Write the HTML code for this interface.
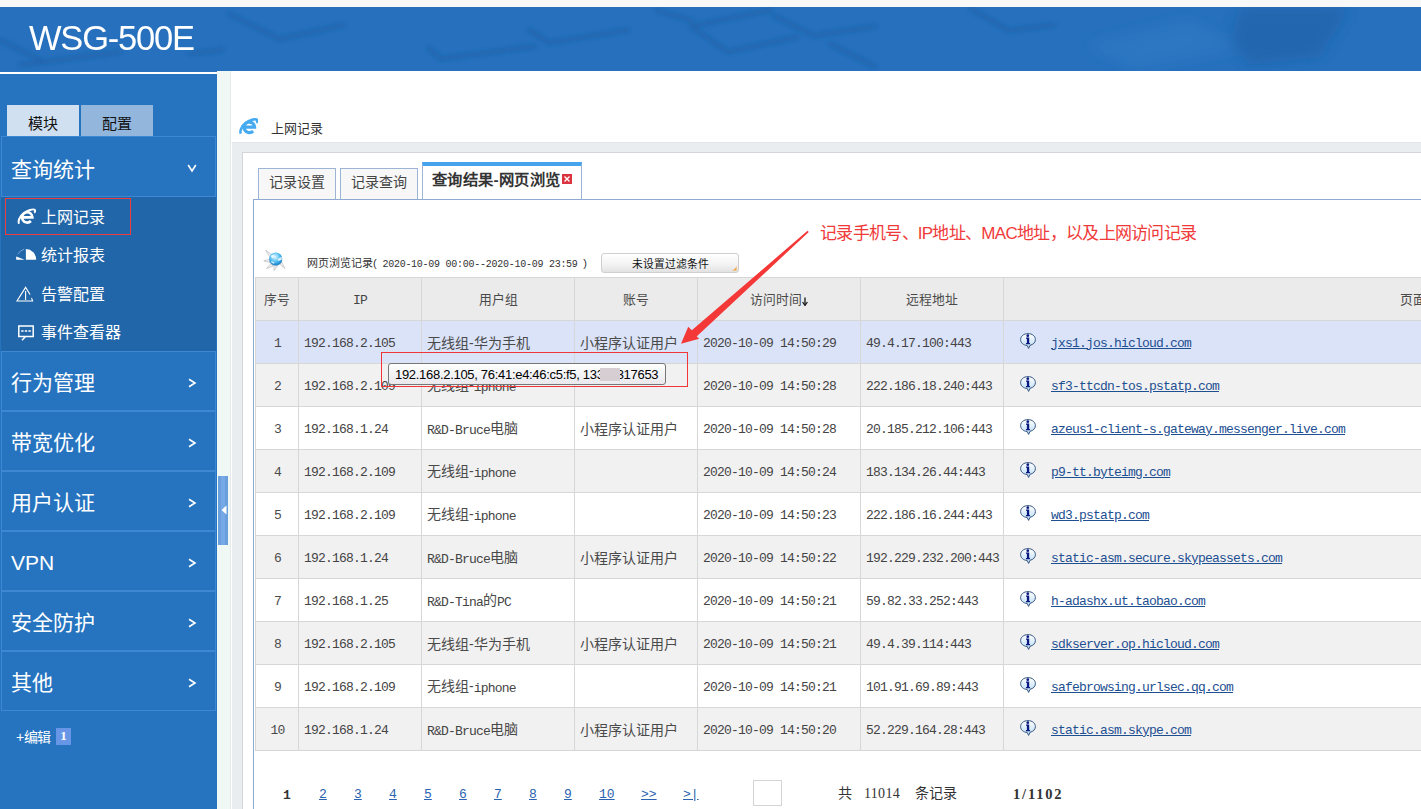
<!DOCTYPE html>
<html lang="zh-CN">
<head>
<meta charset="utf-8">
<style>
*{margin:0;padding:0;box-sizing:border-box}
html,body{width:1421px;height:809px;overflow:hidden;background:#fff;font-family:"Liberation Sans",sans-serif;position:relative}
.a{position:absolute}
#topstrip{left:0;top:0;width:1421px;height:7px;background:#f8f8f8}
#hdr{left:0;top:7px;width:1421px;height:64px;background:#2670bd;overflow:hidden}
#logo{left:29px;top:10px;color:#fff;font-size:35px;line-height:42px;letter-spacing:-1.2px;transform:scaleX(0.985);transform-origin:0 0}
#side{left:0;top:71px;width:217px;height:738px;background:#2674c0}
#sideline{left:0;top:72px;width:217px;height:2px;background:#fff}
.stab{top:105px;height:31px;width:72px;text-align:center;font-size:15px;line-height:37px;color:#111}
.mi{left:1px;width:215px;height:60px;border:1px solid #3e88d2;background:#2674c0;color:#fff}
.mi .t{position:absolute;left:9px;top:17px;font-size:21px;line-height:28px}
.mi.first .t{top:19px}
.mi .c{position:absolute;left:185px;top:26px}
.mi.first .c{top:26px}
#sub{left:1px;top:197px;width:215px;height:154px;background:#2166a8}
.si{left:41px;color:#fff;font-size:16px;line-height:22px}
#strip{left:217px;top:71px;width:14px;height:738px;background:#f0f8f6;border-right:1px solid #e6eaec}
#handle{left:218px;top:476px;width:10px;height:69px;background:#6a9fde}
#gray{left:231px;top:142px;width:1190px;height:667px;background:#e9edf0;border-left:1px solid #fff;border-top:1px solid #e3e6e9}
#inner{left:242px;top:152px;width:1179px;height:657px;background:#fff;border-left:1px solid #d2d6da;border-top:1px solid #d2d6da}

.tab{top:168px;height:32px;background:#f7f7f7;border:1px solid #9db5d5;border-bottom:none;font-size:14px;line-height:26px;color:#444;text-align:center}
#acttab{left:422px;top:162px;width:160px;height:38px;background:#fff;border:1px solid #9db5d5;border-top:4px solid #46a3ee;border-bottom:none;font-size:15.3px;font-weight:bold;color:#333;line-height:28px;padding-left:9px;letter-spacing:0.4px}
#xclose{position:absolute;left:139px;top:8px}
#panel{left:253px;top:199px;width:1168px;height:610px;border-left:1px solid #8eaad0;border-top:1px solid #8eaad0;background:transparent}
#rtitle{left:307px;top:256px;font-size:11px;line-height:14px;color:#333}
.m{font-family:"Liberation Mono",monospace}
#rtitle .m{font-size:10px;letter-spacing:-0.26px}
#fbtn{left:601px;top:253px;width:138px;height:20px;border:1px solid #cfcfcf;border-radius:3px;background:linear-gradient(#fff,#f2f2f2 60%,#e2e2e2);font-size:10.8px;line-height:21px;text-align:center;color:#111;padding-left:1px}
#tbl{left:255px;top:277px;border-collapse:collapse;table-layout:fixed;width:1248px}
#tbl td{border:1px solid #d7d7d7;height:43px;font-size:14px;color:#4a4a4a;padding:1px 0 0 5px;white-space:nowrap;overflow:hidden;line-height:20px}
#tbl td.m{font-size:13px;letter-spacing:-0.8px;padding-top:3px;color:#444}
#tbl span.m{font-size:13px;letter-spacing:-0.8px;position:relative;top:1px;color:#444}
#tbl tr.h td{background:#ebebeb;text-align:center;font-size:12.8px;padding:1px 0 0 0}
#tbl tr.h td.pg{text-align:left;padding-left:396px}
#tbl tr.r1 td{background:#dbe3f8}
#tbl tr.g td{background:#f1f1f1}
#tbl tr.w td{background:#fff}
#tbl td.c{text-align:center;padding:3px 0 0 1px;font-family:"Liberation Mono",monospace;font-size:13px;letter-spacing:-0.8px}
#tbl td.u{padding-left:16px;padding-top:1px}

#tbl a{color:#1d4f91;text-decoration:underline;font-family:"Liberation Mono",monospace;font-size:13px;letter-spacing:-0.8px}
.pn{top:787px;font-size:13px;line-height:16px;font-family:"Liberation Mono",monospace}
.pn.b{font-weight:bold;color:#333;top:788px}
.pn.l{color:#2b63b0;text-decoration:underline}
#note{left:820px;top:223px;font-size:17px;line-height:22px;color:#f03a3a;white-space:nowrap;letter-spacing:-0.7px}
#redbox{left:381px;top:352px;width:307px;height:35px;border:1.5px solid #f23636}
#tip{left:388px;top:363px;width:278px;height:22px;border:1px solid #777;border-radius:3px;background:linear-gradient(#fff,#e9e9ee);font-size:13px;line-height:21px;color:#000;padding-left:6px;white-space:nowrap;letter-spacing:-0.3px}
#blur{display:inline-block;width:20px;height:13px;background:#d6ced2;vertical-align:-2px;margin:0 -3px 0 -4px;position:relative}

#redsel{left:5px;top:198px;width:126px;height:37px;border:1px solid #f03c3c}
.info{display:inline-block;width:16px;height:16px;vertical-align:-3px;margin-right:15px;background:none;position:relative;top:-1px}
</style>
</head>
<body>
<div id="topstrip" class="a"></div>
<div id="hdr" class="a">
  <svg class="a" style="left:0;top:0" width="1421" height="64" viewBox="0 0 1421 64">
 <defs><filter id="bl" x="-10%" y="-50%" width="120%" height="200%"><feGaussianBlur stdDeviation="2.2"/></filter><filter id="bl2" x="-30%" y="-50%" width="160%" height="200%"><feGaussianBlur stdDeviation="7"/></filter></defs>
 <g filter="url(#bl)" fill="none" stroke="#1a5699" stroke-opacity="0.45" stroke-width="4" stroke-linejoin="round" stroke-linecap="round">
  <path d="M229.5 7.0 L279.7 32.0 L344.0 18.0"/>
  <path d="M428.7 41.0 L441.0 51.8 L534.6 39.3"/>
  <path d="M529.0 23.0 L549.0 35.7 L628.0 23.0"/>
  <path d="M190.0 46.5 L222.0 43.0"/>
  <path d="M656.6 3.4 L692.5 14.0"/>
  <path d="M771.0 3.0 L690.7 19.4 L728.0 44.8 L797.6 30.0"/>
  <path d="M773.6 8.7 L813.7 28.7 L875.0 19.4"/>
  <path d="M829.7 36.8 L875.0 59.5"/>
  <path d="M971.0 2.0 L1009.0 23.4 L1054.0 18.0"/>
  <path d="M0.0 33.0 L40.0 53.0"/>
  <path d="M20.0 58.0 L120.0 45.0"/>
 </g>
 <g filter="url(#bl2)">
  <path d="M1240 0 L1350 0 L1320 50 L1250 58 L1230 35 Z" fill="#1a5596" fill-opacity="0.38"/>
  <path d="M1085 38 L1190 12 L1240 42 L1135 62 Z" fill="#3b86d0" fill-opacity="0.25"/>
 </g>
</svg>
  <div id="logo" class="a">WSG-500E</div>
</div>
<div id="side" class="a"></div>
<div id="sideline" class="a"></div>
<div class="a stab" style="left:7px;background:#d0e0f1">模块</div>
<div class="a stab" style="left:81px;background:#93b6dc">配置</div>

<div class="a mi first" style="top:136px;height:61px"><span class="t">查询统计</span><svg class="c" width="10" height="10" viewBox="0 0 10 10"><path d="M1.2 2 L5 8 L8.8 2" fill="none" stroke="#fff" stroke-width="1.6"/></svg></div>
<div id="sub" class="a"></div>
<div class="a si" style="top:207px">上网记录</div>
<div class="a si" style="top:245px">统计报表</div>
<div class="a si" style="top:284px">告警配置</div>
<div class="a si" style="top:322px">事件查看器</div>

<div class="a mi" style="top:351px"><span class="t">行为管理</span><svg class="c" width="10" height="10" viewBox="0 0 10 10"><path d="M2 1.2 L8 5 L2 8.8" fill="none" stroke="#fff" stroke-width="1.6"/></svg></div>
<div class="a mi" style="top:411px"><span class="t">带宽优化</span><svg class="c" width="10" height="10" viewBox="0 0 10 10"><path d="M2 1.2 L8 5 L2 8.8" fill="none" stroke="#fff" stroke-width="1.6"/></svg></div>
<div class="a mi" style="top:471px"><span class="t">用户认证</span><svg class="c" width="10" height="10" viewBox="0 0 10 10"><path d="M2 1.2 L8 5 L2 8.8" fill="none" stroke="#fff" stroke-width="1.6"/></svg></div>
<div class="a mi" style="top:531px"><span class="t">VPN</span><svg class="c" width="10" height="10" viewBox="0 0 10 10"><path d="M2 1.2 L8 5 L2 8.8" fill="none" stroke="#fff" stroke-width="1.6"/></svg></div>
<div class="a mi" style="top:591px"><span class="t">安全防护</span><svg class="c" width="10" height="10" viewBox="0 0 10 10"><path d="M2 1.2 L8 5 L2 8.8" fill="none" stroke="#fff" stroke-width="1.6"/></svg></div>
<div class="a mi" style="top:651px"><span class="t">其他</span><svg class="c" width="10" height="10" viewBox="0 0 10 10"><path d="M2 1.2 L8 5 L2 8.8" fill="none" stroke="#fff" stroke-width="1.6"/></svg></div>


<svg class="a" style="left:17px;top:208px" width="19" height="17" viewBox="0 0 18 16" fill="#fff" stroke="#fff"><path fill="none" stroke-width="2.5" d="M5.4 8.8 H14.6 A4.9 4.9 0 1 0 13.2 12.3"/><path fill="none" stroke-width="1.9" d="M2 14.8 C0.6 12.6 2.6 7.8 6.2 5 C9.8 2.2 15.4 0.4 16.8 1.7 C17.6 2.5 17.2 3.7 16.2 4.3"/></svg>
<svg class="a" style="left:16px;top:248px" width="21" height="13" viewBox="0 0 21 13">
 <path d="M9.9 1 A10.5 10.8 0 0 1 20.2 11.8 L9.9 11.8 Z" fill="#fff"/>
 <path d="M1.8 6.2 A10 10 0 0 1 8.2 1.2" fill="none" stroke="#7fa6d2" stroke-width="0.9"/>
 <path d="M0.2 8.4 Q4 9.6 8.6 11.8 L0.2 11.8 Z" fill="#fff"/>
</svg>
<svg class="a" style="left:16px;top:286px" width="18" height="17" viewBox="0 0 18 17" fill="none" stroke="#fff" stroke-width="1.1" stroke-linecap="round">
 <path d="M13.9 8.2 L9.6 1.4 L1 15 H16.6 L15.7 12.3"/>
 <path d="M9.6 5.4 V13.4"/>
</svg>
<svg class="a" style="left:17px;top:325px" width="18" height="17" viewBox="0 0 18 17" fill="none" stroke="#fff" stroke-width="1.5">
 <path d="M8.6 11.4 H1.8 V1 H16.2 V11.4 H8.6 L5 15.2"/>
 <path d="M4.2 6 H6.6 M7.8 6 H10.2 M11.4 6 H13.8" stroke-width="1.6"/>
</svg>
<div class="a" id="redsel"></div>
<div id="strip" class="a"></div>
<div id="handle" class="a"><svg width="10" height="69" viewBox="0 0 10 69" style="display:block"><rect x="3" y="0" width="4" height="69" fill="#7fb0ea" opacity="0.6"/><path d="M3.5 34 L8.5 29.5 L8.5 38.5 Z" fill="#fff"/></svg></div>
<div class="a" style="left:16px;top:728px;color:#fff;font-size:14px;line-height:18px;letter-spacing:-0.5px">+编辑</div>
<div class="a" style="left:56px;top:728px;width:15px;height:17px;background:#6796e6;color:#fff;font-size:13px;line-height:16px;font-weight:bold;text-align:center;font-family:'Liberation Serif',serif">1</div>


<div id="gray" class="a"></div>
<div id="inner" class="a"></div>
<svg class="a" style="left:239px;top:118px" width="19" height="17" viewBox="0 0 18 16" fill="#45aaf0" stroke="#45aaf0"><path fill="none" stroke-width="3" d="M5.6 8.6 H14.8 A5 5 0 1 0 13.4 12.3"/><path fill="none" stroke-width="2.4" d="M1.8 14.8 C0.4 12.6 2.4 7.6 6.2 4.8 C9.8 2 15.4 0.2 16.9 1.6 C17.6 2.3 17.3 3.6 16.3 4.3"/></svg>
<svg class="a" style="left:263px;top:248px" width="23" height="23" viewBox="0 0 23 23">
 <g fill="#f2f2f2" stroke="#b4b4b4" stroke-width="0.6">
  <path d="M2.5 2 L10 7.5 L7.5 10 Z"/><path d="M0.8 13 L7 11 L7.5 14.5 Z"/><path d="M3.5 20.5 L8 15.5 L10 18 Z"/><path d="M11 22.5 L11 17.5 L14.5 17.8 Z"/><path d="M22 20.5 L16.5 16 L18.5 14 Z"/>
 </g>
 <defs><radialGradient id="gl" cx="0.45" cy="0.35" r="0.75"><stop offset="0" stop-color="#e6f8ff"/><stop offset="0.5" stop-color="#4cbcf0"/><stop offset="1" stop-color="#0a65b5"/></radialGradient></defs>
 <circle cx="12.7" cy="11" r="6.6" fill="url(#gl)"/>
 <path d="M7.5 7.8 L10.8 6.5 L11.5 9 L9 10.2 Z M14.5 11 L18.5 9 L19 11.5 L15.5 13 Z M8.5 13 L11.5 14.5 L11 15.8 L8 14.2 Z" fill="#f4fbff" opacity="0.85"/>
</svg>


<!-- page title -->
<div class="a" style="left:271px;top:121px;font-size:13px;line-height:16px;color:#333">上网记录</div>

<!-- tabs -->
<div class="a tab" style="left:258px;width:78px">记录设置</div>
<div class="a tab" style="left:340px;width:78px">记录查询</div>
<div class="a" id="acttab"><span>查询结果-网页浏览</span><svg id="xclose" width="10" height="10" viewBox="0 0 10 10"><rect width="10" height="10" fill="#d9343f"/><path d="M2.5 2.5 L7.5 7.5 M7.5 2.5 L2.5 7.5" stroke="#fff" stroke-width="1.4"/></svg></div>
<div class="a" id="panel"></div>

<div class="a" id="rtitle">网页浏览记录(<span class="m"> 2020-10-09 00:00--2020-10-09 23:59 </span>)</div>
<div class="a" id="fbtn">未设置过滤条件<svg style="position:absolute;right:1px;bottom:1px" width="7" height="7" viewBox="0 0 7 7"><path d="M6.5 0.5 C6.5 4 4.5 6.5 0.5 6.5 L6.5 6.5 Z" fill="#f0a030"/></svg></div>

<!-- table -->
<table class="a" id="tbl">
<colgroup><col style="width:43px"><col style="width:123px"><col style="width:153px"><col style="width:123px"><col style="width:163px"><col style="width:143px"><col style="width:500px"></colgroup>
<tr class="h"><td>序号</td><td><span class="m">IP</span></td><td>用户组</td><td>账号</td><td>访问时间<svg width="6" height="9" viewBox="0 0 6 9" style="vertical-align:-2px;margin-left:0px"><path d="M3 0.5 V7.5" stroke="#111" stroke-width="1.3"/><path d="M0.6 5 L3 8.5 L5.4 5" fill="none" stroke="#111" stroke-width="1.2"/></svg></td><td>远程地址</td><td class="pg">页面地址</td></tr>
<tr class="r1"><td class="c">1</td><td class="m">192.168.2.105</td><td>无线组-华为手机</td><td>小程序认证用户</td><td class="m">2020-10-09 14:50:29</td><td class="m">49.4.17.100:443</td><td class="u"><svg class="info" width="16" height="16" viewBox="0 0 16 16"><defs><linearGradient id="ig1" x1="0" y1="0" x2="0" y2="1"><stop offset="0" stop-color="#ffffff"/><stop offset="1" stop-color="#b7dcf5"/></linearGradient></defs><path d="M8 0.6 C12.3 0.6 15.4 3.2 15.4 6.6 C15.4 9.4 13.3 11.6 10 12.3 L8.6 15.4 L7.2 12.5 C3.3 12.2 0.6 9.8 0.6 6.6 C0.6 3.2 3.7 0.6 8 0.6 Z" fill="url(#ig1)" stroke="#35557f" stroke-width="1"/><circle cx="7.8" cy="2.7" r="1.4" fill="#0b1a80"/><path d="M6 4.6 H9.2 V10 H10 V11.2 H6 V10 H6.9 V5.8 H6 Z" fill="#0b1a80"/></svg><a>jxs1.jos.hicloud.com</a></td></tr>
<tr class="g"><td class="c">2</td><td class="m">192.168.2.109</td><td>无线组-<span class="m">iphone</span></td><td></td><td class="m">2020-10-09 14:50:28</td><td class="m">222.186.18.240:443</td><td class="u"><svg class="info" width="16" height="16" viewBox="0 0 16 16"><defs><linearGradient id="ig2" x1="0" y1="0" x2="0" y2="1"><stop offset="0" stop-color="#ffffff"/><stop offset="1" stop-color="#b7dcf5"/></linearGradient></defs><path d="M8 0.6 C12.3 0.6 15.4 3.2 15.4 6.6 C15.4 9.4 13.3 11.6 10 12.3 L8.6 15.4 L7.2 12.5 C3.3 12.2 0.6 9.8 0.6 6.6 C0.6 3.2 3.7 0.6 8 0.6 Z" fill="url(#ig2)" stroke="#35557f" stroke-width="1"/><circle cx="7.8" cy="2.7" r="1.4" fill="#0b1a80"/><path d="M6 4.6 H9.2 V10 H10 V11.2 H6 V10 H6.9 V5.8 H6 Z" fill="#0b1a80"/></svg><a>sf3-ttcdn-tos.pstatp.com</a></td></tr>
<tr class="w"><td class="c">3</td><td class="m">192.168.1.24</td><td><span class="m">R&amp;D-Bruce</span>电脑</td><td>小程序认证用户</td><td class="m">2020-10-09 14:50:28</td><td class="m">20.185.212.106:443</td><td class="u"><svg class="info" width="16" height="16" viewBox="0 0 16 16"><defs><linearGradient id="ig3" x1="0" y1="0" x2="0" y2="1"><stop offset="0" stop-color="#ffffff"/><stop offset="1" stop-color="#b7dcf5"/></linearGradient></defs><path d="M8 0.6 C12.3 0.6 15.4 3.2 15.4 6.6 C15.4 9.4 13.3 11.6 10 12.3 L8.6 15.4 L7.2 12.5 C3.3 12.2 0.6 9.8 0.6 6.6 C0.6 3.2 3.7 0.6 8 0.6 Z" fill="url(#ig3)" stroke="#35557f" stroke-width="1"/><circle cx="7.8" cy="2.7" r="1.4" fill="#0b1a80"/><path d="M6 4.6 H9.2 V10 H10 V11.2 H6 V10 H6.9 V5.8 H6 Z" fill="#0b1a80"/></svg><a>azeus1-client-s.gateway.messenger.live.com</a></td></tr>
<tr class="g"><td class="c">4</td><td class="m">192.168.2.109</td><td>无线组-<span class="m">iphone</span></td><td></td><td class="m">2020-10-09 14:50:24</td><td class="m">183.134.26.44:443</td><td class="u"><svg class="info" width="16" height="16" viewBox="0 0 16 16"><defs><linearGradient id="ig4" x1="0" y1="0" x2="0" y2="1"><stop offset="0" stop-color="#ffffff"/><stop offset="1" stop-color="#b7dcf5"/></linearGradient></defs><path d="M8 0.6 C12.3 0.6 15.4 3.2 15.4 6.6 C15.4 9.4 13.3 11.6 10 12.3 L8.6 15.4 L7.2 12.5 C3.3 12.2 0.6 9.8 0.6 6.6 C0.6 3.2 3.7 0.6 8 0.6 Z" fill="url(#ig4)" stroke="#35557f" stroke-width="1"/><circle cx="7.8" cy="2.7" r="1.4" fill="#0b1a80"/><path d="M6 4.6 H9.2 V10 H10 V11.2 H6 V10 H6.9 V5.8 H6 Z" fill="#0b1a80"/></svg><a>p9-tt.byteimg.com</a></td></tr>
<tr class="w"><td class="c">5</td><td class="m">192.168.2.109</td><td>无线组-<span class="m">iphone</span></td><td></td><td class="m">2020-10-09 14:50:23</td><td class="m">222.186.16.244:443</td><td class="u"><svg class="info" width="16" height="16" viewBox="0 0 16 16"><defs><linearGradient id="ig5" x1="0" y1="0" x2="0" y2="1"><stop offset="0" stop-color="#ffffff"/><stop offset="1" stop-color="#b7dcf5"/></linearGradient></defs><path d="M8 0.6 C12.3 0.6 15.4 3.2 15.4 6.6 C15.4 9.4 13.3 11.6 10 12.3 L8.6 15.4 L7.2 12.5 C3.3 12.2 0.6 9.8 0.6 6.6 C0.6 3.2 3.7 0.6 8 0.6 Z" fill="url(#ig5)" stroke="#35557f" stroke-width="1"/><circle cx="7.8" cy="2.7" r="1.4" fill="#0b1a80"/><path d="M6 4.6 H9.2 V10 H10 V11.2 H6 V10 H6.9 V5.8 H6 Z" fill="#0b1a80"/></svg><a>wd3.pstatp.com</a></td></tr>
<tr class="g"><td class="c">6</td><td class="m">192.168.1.24</td><td><span class="m">R&amp;D-Bruce</span>电脑</td><td>小程序认证用户</td><td class="m">2020-10-09 14:50:22</td><td class="m">192.229.232.200:443</td><td class="u"><svg class="info" width="16" height="16" viewBox="0 0 16 16"><defs><linearGradient id="ig6" x1="0" y1="0" x2="0" y2="1"><stop offset="0" stop-color="#ffffff"/><stop offset="1" stop-color="#b7dcf5"/></linearGradient></defs><path d="M8 0.6 C12.3 0.6 15.4 3.2 15.4 6.6 C15.4 9.4 13.3 11.6 10 12.3 L8.6 15.4 L7.2 12.5 C3.3 12.2 0.6 9.8 0.6 6.6 C0.6 3.2 3.7 0.6 8 0.6 Z" fill="url(#ig6)" stroke="#35557f" stroke-width="1"/><circle cx="7.8" cy="2.7" r="1.4" fill="#0b1a80"/><path d="M6 4.6 H9.2 V10 H10 V11.2 H6 V10 H6.9 V5.8 H6 Z" fill="#0b1a80"/></svg><a>static-asm.secure.skypeassets.com</a></td></tr>
<tr class="w"><td class="c">7</td><td class="m">192.168.1.25</td><td><span class="m">R&amp;D-Tina</span>的<span class="m">PC</span></td><td></td><td class="m">2020-10-09 14:50:21</td><td class="m">59.82.33.252:443</td><td class="u"><svg class="info" width="16" height="16" viewBox="0 0 16 16"><defs><linearGradient id="ig7" x1="0" y1="0" x2="0" y2="1"><stop offset="0" stop-color="#ffffff"/><stop offset="1" stop-color="#b7dcf5"/></linearGradient></defs><path d="M8 0.6 C12.3 0.6 15.4 3.2 15.4 6.6 C15.4 9.4 13.3 11.6 10 12.3 L8.6 15.4 L7.2 12.5 C3.3 12.2 0.6 9.8 0.6 6.6 C0.6 3.2 3.7 0.6 8 0.6 Z" fill="url(#ig7)" stroke="#35557f" stroke-width="1"/><circle cx="7.8" cy="2.7" r="1.4" fill="#0b1a80"/><path d="M6 4.6 H9.2 V10 H10 V11.2 H6 V10 H6.9 V5.8 H6 Z" fill="#0b1a80"/></svg><a>h-adashx.ut.taobao.com</a></td></tr>
<tr class="g"><td class="c">8</td><td class="m">192.168.2.105</td><td>无线组-华为手机</td><td>小程序认证用户</td><td class="m">2020-10-09 14:50:21</td><td class="m">49.4.39.114:443</td><td class="u"><svg class="info" width="16" height="16" viewBox="0 0 16 16"><defs><linearGradient id="ig8" x1="0" y1="0" x2="0" y2="1"><stop offset="0" stop-color="#ffffff"/><stop offset="1" stop-color="#b7dcf5"/></linearGradient></defs><path d="M8 0.6 C12.3 0.6 15.4 3.2 15.4 6.6 C15.4 9.4 13.3 11.6 10 12.3 L8.6 15.4 L7.2 12.5 C3.3 12.2 0.6 9.8 0.6 6.6 C0.6 3.2 3.7 0.6 8 0.6 Z" fill="url(#ig8)" stroke="#35557f" stroke-width="1"/><circle cx="7.8" cy="2.7" r="1.4" fill="#0b1a80"/><path d="M6 4.6 H9.2 V10 H10 V11.2 H6 V10 H6.9 V5.8 H6 Z" fill="#0b1a80"/></svg><a>sdkserver.op.hicloud.com</a></td></tr>
<tr class="w"><td class="c">9</td><td class="m">192.168.2.109</td><td>无线组-<span class="m">iphone</span></td><td></td><td class="m">2020-10-09 14:50:21</td><td class="m">101.91.69.89:443</td><td class="u"><svg class="info" width="16" height="16" viewBox="0 0 16 16"><defs><linearGradient id="ig9" x1="0" y1="0" x2="0" y2="1"><stop offset="0" stop-color="#ffffff"/><stop offset="1" stop-color="#b7dcf5"/></linearGradient></defs><path d="M8 0.6 C12.3 0.6 15.4 3.2 15.4 6.6 C15.4 9.4 13.3 11.6 10 12.3 L8.6 15.4 L7.2 12.5 C3.3 12.2 0.6 9.8 0.6 6.6 C0.6 3.2 3.7 0.6 8 0.6 Z" fill="url(#ig9)" stroke="#35557f" stroke-width="1"/><circle cx="7.8" cy="2.7" r="1.4" fill="#0b1a80"/><path d="M6 4.6 H9.2 V10 H10 V11.2 H6 V10 H6.9 V5.8 H6 Z" fill="#0b1a80"/></svg><a>safebrowsing.urlsec.qq.com</a></td></tr>
<tr class="g"><td class="c">10</td><td class="m">192.168.1.24</td><td><span class="m">R&amp;D-Bruce</span>电脑</td><td>小程序认证用户</td><td class="m">2020-10-09 14:50:20</td><td class="m">52.229.164.28:443</td><td class="u"><svg class="info" width="16" height="16" viewBox="0 0 16 16"><defs><linearGradient id="ig10" x1="0" y1="0" x2="0" y2="1"><stop offset="0" stop-color="#ffffff"/><stop offset="1" stop-color="#b7dcf5"/></linearGradient></defs><path d="M8 0.6 C12.3 0.6 15.4 3.2 15.4 6.6 C15.4 9.4 13.3 11.6 10 12.3 L8.6 15.4 L7.2 12.5 C3.3 12.2 0.6 9.8 0.6 6.6 C0.6 3.2 3.7 0.6 8 0.6 Z" fill="url(#ig10)" stroke="#35557f" stroke-width="1"/><circle cx="7.8" cy="2.7" r="1.4" fill="#0b1a80"/><path d="M6 4.6 H9.2 V10 H10 V11.2 H6 V10 H6.9 V5.8 H6 Z" fill="#0b1a80"/></svg><a>static.asm.skype.com</a></td></tr>
</table>

<!-- pagination -->
<div class="a pn b" style="left:283px">1</div>
<div class="a pn l" style="left:319px">2</div>
<div class="a pn l" style="left:354px">3</div>
<div class="a pn l" style="left:389px">4</div>
<div class="a pn l" style="left:424px">5</div>
<div class="a pn l" style="left:459px">6</div>
<div class="a pn l" style="left:494px">7</div>
<div class="a pn l" style="left:529px">8</div>
<div class="a pn l" style="left:564px">9</div>
<div class="a pn l" style="left:599px">10</div>
<div class="a pn l" style="left:641px">&gt;&gt;</div>
<div class="a pn l" style="left:683px">&gt;|</div>
<div class="a" style="left:753px;top:780px;width:29px;height:26px;border:1px solid #d4d4d4;background:#fff"></div>
<div class="a" style="left:838px;top:783px;font-size:14px;line-height:20px;color:#333">共</div>
<div class="a" style="left:864px;top:786px;font-size:14px;line-height:16px;color:#333;font-family:'Liberation Serif',serif;letter-spacing:0.3px">11014</div>
<div class="a" style="left:915px;top:783px;font-size:14px;line-height:20px;color:#333">条记录</div>
<div class="a" style="left:1013px;top:786px;font-size:14.5px;line-height:16px;color:#333;font-weight:bold;font-family:'Liberation Serif',serif;letter-spacing:1.8px">1/1102</div>

<!-- annotation -->
<div class="a" id="note">记录手机号、IP地址、MAC地址，以及上网访问记录</div>
<svg class="a" style="left:0;top:0" width="1421" height="809" viewBox="0 0 1421 809">
  <polygon points="807.5,230.8 691.8,330.2 688.2,326.8 681,343.8 699.2,338.8 696.6,336.6 808.8,232" fill="#f43838"/>
</svg>
<div class="a" id="redbox"></div>
<div class="a" id="tip">192.168.2.105, 76:41:e4:46:c5:f5, 133<span id="blur"></span>317653</div>
</body>
</html>
